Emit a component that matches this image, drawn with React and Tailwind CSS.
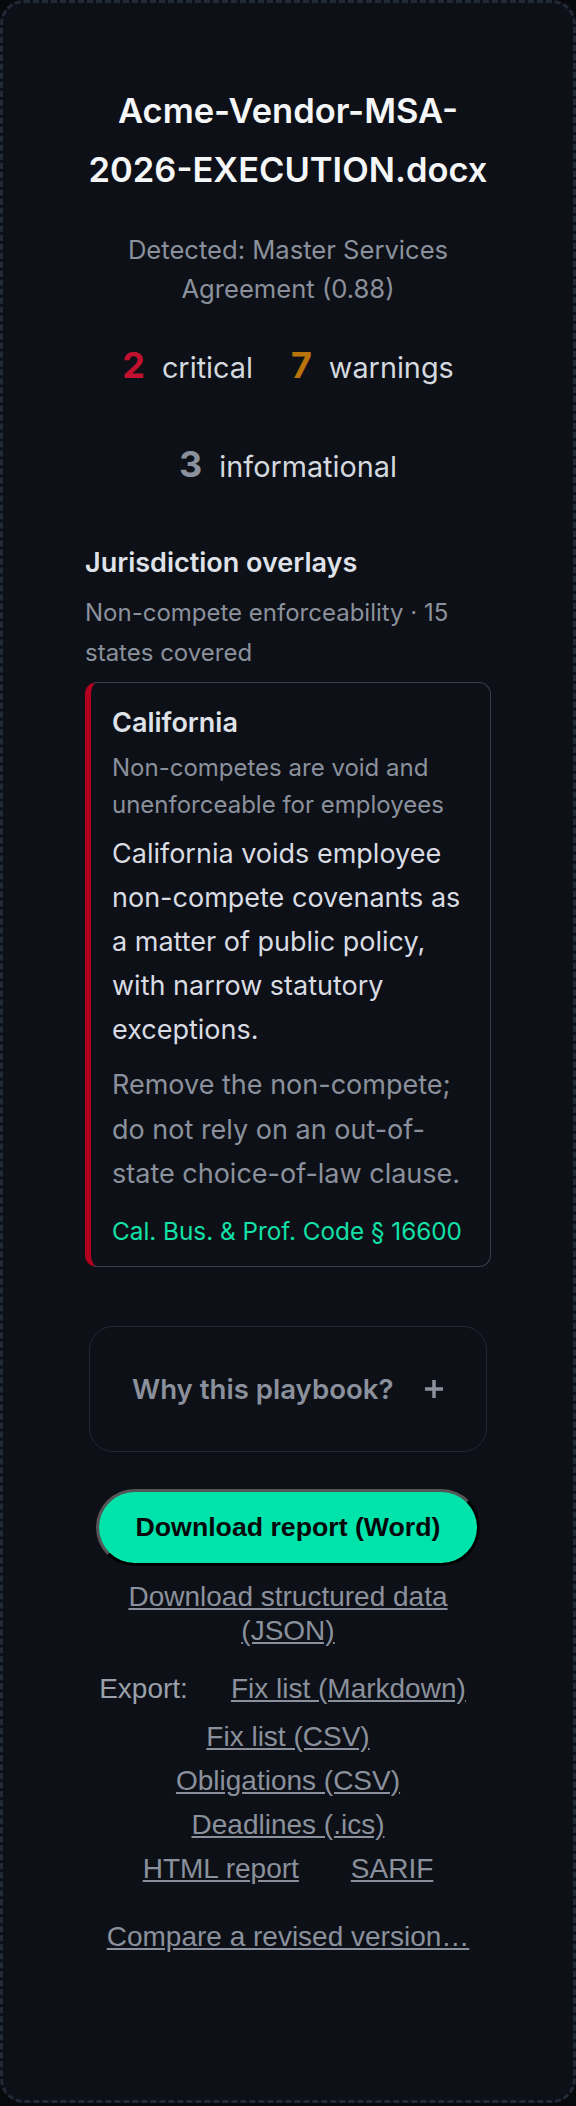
import React from "react";

const counts = [
  { n: 2, label: "critical", tone: "text-[#c2102f]" },
  { n: 7, label: "warnings", tone: "text-[#b8740a]" },
  { n: 3, label: "informational", tone: "text-[#8b919c]" },
];

// export links, one row each the way they sit in the panel
const exportRows = [
  ["Fix list (CSV)"],
  ["Obligations (CSV)"],
  ["Deadlines (.ics)"],
  ["HTML report", "SARIF"],
];

const sans = "font-['Inter','Noto_Sans',sans-serif]";
const arial = "font-['Liberation_Sans',Arial,sans-serif]";

function PlusIcon() {
  return (
    <svg width="20" height="20" viewBox="0 0 20 20" className="shrink-0">
      <path d="M10 1v18M1 10h18" stroke="#8b919c" strokeWidth="3.5" strokeLinecap="butt" />
    </svg>
  );
}

function OverlayCard() {
  return (
    <div className="mt-[9px] rounded-[12px] border border-[#3a3f4a] border-l-[6px] border-l-[#b3001f] pl-[21px] pr-[18px] pt-[20px] pb-[17px]">
      <h4 className="text-[27px] font-semibold leading-[40.5px] text-[#dfe2e8]">California</h4>
      <p className="mt-[6px] text-[24px] leading-[37px] text-[#8b919c]">
        Non-competes are void and unenforceable for employees
      </p>
      <p className="mt-[9px] text-[27px] leading-[44px] text-[#d9dce2]">
        California voids employee non-compete covenants as a matter of public policy, with narrow
        statutory exceptions.
      </p>
      <p className="mt-[11px] text-[27px] leading-[44.5px] text-[#8b919c]">
        Remove the non-compete; do not rely on an out-of-state choice-of-law clause.
      </p>
      <p className="mt-[16px] text-[24.3px] leading-[36px] text-[#12e0a8]">
        Cal. Bus. &amp; Prof. Code § 16600
      </p>
    </div>
  );
}

export default function App() {
  return (
    <div className="min-h-[2106px] bg-[#08090c]">
      <div
        className={`${sans} min-h-[2103px] rounded-[24px] border-[3px] border-dashed border-[#222a37] bg-[#0d1017] px-[82px] pt-[79px]`}
      >
        <h2 className="text-center text-[34.5px] font-semibold leading-[58.5px] text-[#f5f6f8]">
          Acme-Vendor-MSA-2026-EXECUTION.docx
        </h2>
        <p className="mt-[31px] text-center text-[25.6px] leading-[39px] text-[#8b919c]">
          Detected: Master Services Agreement (0.88)
        </p>

        <div className="mt-[30px] flex flex-wrap justify-center gap-x-[38px] gap-y-[45px]">
          {counts.map((c) => (
            <div key={c.label} className="flex items-baseline gap-[17px]">
              <span className={`text-[36px] font-bold leading-[54px] ${c.tone}`}>{c.n}</span>
              <span className="text-[28.8px] leading-[40px] text-[#d4d8df]">{c.label}</span>
            </div>
          ))}
        </div>

        <h3 className="mt-[52px] text-[27px] font-semibold leading-[40.5px] text-[#dfe2e8]">
          Jurisdiction overlays
        </h3>
        <p className="mt-[9px] text-[24px] leading-[40px] text-[#8b919c]">
          Non-compete enforceability · 15 states covered
        </p>

        <OverlayCard />

        <div className="mx-[4px] mt-[59px] flex items-center justify-between rounded-[24px] border border-[#222733] px-[42px] py-[42px]">
          <span className="text-[27.6px] font-semibold leading-[40px] text-[#8b919c]">
            Why this playbook?
          </span>
          <PlusIcon />
        </div>

        <div className="mt-[37px] flex justify-center">
          <button
            className={`${arial} rounded-full border-[3px] border-solid border-t-[#555555] border-l-[#555555] border-r-black border-b-black bg-[#00e3ab] px-[37px] py-[20px] text-[26.7px] font-bold leading-[31px] text-[#05080a]`}
          >
            Download report (Word)
          </button>
        </div>

        <div className={`${arial} text-[28px] text-[#8b919c]`}>
          <p className="mt-[14px] text-center leading-[34px]">
            <a className="underline">Download structured data (JSON)</a>
          </p>

          <div className="mt-[25px] flex flex-col items-center gap-[12px] leading-[32px]">
            <div className="mr-[11px] mb-[4px] flex gap-[43px]">
              <span className="text-[#9aa0aa]">Export:</span>
              <a className="underline">Fix list (Markdown)</a>
            </div>
            {exportRows.map((row) => (
              <div key={row[0]} className="flex gap-[52px]">
                {row.map((l) => (
                  <a key={l} className="underline">
                    {l}
                  </a>
                ))}
              </div>
            ))}
          </div>

          <p className="mt-[36px] text-center leading-[32px]">
            <a className="underline">Compare a revised version…</a>
          </p>
        </div>
      </div>
    </div>
  );
}
